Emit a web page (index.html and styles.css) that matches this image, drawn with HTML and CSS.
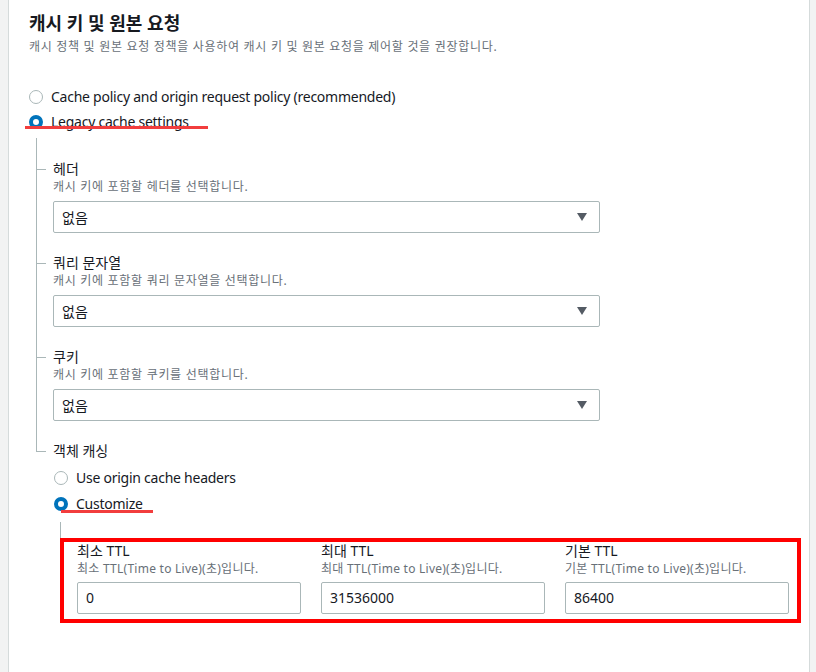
FILE: index.html
```html
<!DOCTYPE html>
<html lang="ko">
<head>
<meta charset="UTF-8">
<title>캐시 키 및 원본 요청</title>
<link rel="stylesheet" href="styles.css">
</head>
<body>
  <div class="panel">
    <h2 class="title">캐시 키 및 원본 요청</h2>
    <p class="subtitle">캐시 정책 및 원본 요청 정책을 사용하여 캐시 키 및 원본 요청을 제어할 것을 권장합니다.</p>

    <div class="radio-group top-group">
      <div class="radio-row">
        <span class="radio"></span>
        <span class="radio-label">Cache policy and origin request policy (recommended)</span>
      </div>
      <div class="radio-row">
        <span class="radio checked"></span>
        <span class="radio-label">Legacy cache settings</span>
        <span class="mark mark-legacy"></span>
      </div>
    </div>

    <div class="tree">
      <div class="tree-item">
        <div class="field-label">헤더</div>
        <div class="field-desc">캐시 키에 포함할 헤더를 선택합니다.</div>
        <div class="select">
          <span>없음</span>
          <svg class="caret" width="10" height="8" viewBox="0 0 10 8"><path d="M0 0 H10 L5 8 Z" fill="#545b64"/></svg>
        </div>
      </div>
      <div class="tree-item">
        <div class="field-label">쿼리 문자열</div>
        <div class="field-desc">캐시 키에 포함할 쿼리 문자열을 선택합니다.</div>
        <div class="select">
          <span>없음</span>
          <svg class="caret" width="10" height="8" viewBox="0 0 10 8"><path d="M0 0 H10 L5 8 Z" fill="#545b64"/></svg>
        </div>
      </div>
      <div class="tree-item">
        <div class="field-label">쿠키</div>
        <div class="field-desc">캐시 키에 포함할 쿠키를 선택합니다.</div>
        <div class="select">
          <span>없음</span>
          <svg class="caret" width="10" height="8" viewBox="0 0 10 8"><path d="M0 0 H10 L5 8 Z" fill="#545b64"/></svg>
        </div>
      </div>
      <div class="tree-item last">
        <div class="field-label">객체 캐싱</div>
        <div class="radio-group sub-group">
          <div class="radio-row">
            <span class="radio"></span>
            <span class="radio-label">Use origin cache headers</span>
          </div>
          <div class="radio-row">
            <span class="radio checked"></span>
            <span class="radio-label">Customize</span>
            <span class="mark mark-custom"></span>
          </div>
        </div>
        <div class="stem"></div>
        <div class="ttl-box">
          <div class="ttl-field">
            <div class="ttl-label">최소 TTL</div>
            <div class="ttl-desc">최소 TTL(Time to Live)(초)입니다.</div>
            <div class="input">0</div>
          </div>
          <div class="ttl-field">
            <div class="ttl-label">최대 TTL</div>
            <div class="ttl-desc">최대 TTL(Time to Live)(초)입니다.</div>
            <div class="input">31536000</div>
          </div>
          <div class="ttl-field">
            <div class="ttl-label">기본 TTL</div>
            <div class="ttl-desc">기본 TTL(Time to Live)(초)입니다.</div>
            <div class="input">86400</div>
          </div>
        </div>
      </div>
    </div>
  </div>
</body>
</html>
```

FILE: styles.css
```css
body {
  margin: 0;
  padding: 0;
  background: #f2f3f3;
  font-family: "Noto Sans", "Noto Sans CJK KR", sans-serif;
  color: #16191f;
}

.panel {
  box-sizing: border-box;
  width: 802px;
  min-height: 100vh;
  margin-left: 8px;
  padding: 0 20px;
  background: #fff;
  border-left: 1px solid #d5dbdb;
  border-right: 1px solid #d5dbdb;
}

.title {
  margin: 0;
  padding-top: 12px;
  font-size: 18px;
  line-height: 22px;
  font-weight: 700;
}

.subtitle {
  margin: 5px 0 0;
  font-size: 12px;
  line-height: 16px;
  letter-spacing: 0.7px;
  color: #687078;
}

/* radios */

.top-group {
  margin-top: 29px;
}

.radio-row {
  position: relative;
  display: flex;
  align-items: center;
  height: 25px;
}
.sub-group .radio-row {
  height: 26px;
}
.sub-group {
  margin-top: 4px;
}
.sub-group .radio {
  margin-left: 1px;
}

.radio {
  box-sizing: border-box;
  width: 14px;
  height: 14px;
  border-radius: 50%;
  border: 1.5px solid #aab7b8;
  background: #fff;
  flex-shrink: 0;
}
.radio.checked {
  border: 4px solid #0073bb;
}

.radio-label {
  margin-left: 8px;
  font-size: 14px;
  line-height: 20px;
  letter-spacing: -0.25px;
}

.mark {
  position: absolute;
  height: 3px;
  background: #f23d3d;
}
.mark-legacy {
  left: -4px;
  top: 17px;
  width: 183px;
}
.mark-custom {
  left: 8px;
  top: 19px;
  width: 92px;
}

/* tree */

.tree {
  margin-left: 7px;
  padding-top: 25px;
}

.tree-item {
  position: relative;
  padding-left: 17px;
  margin-bottom: 20px;
}
.tree-item::before {
  content: "";
  position: absolute;
  left: 0;
  top: -21px;
  bottom: 0;
  border-left: 1px solid #aab7b8;
}
.tree-item.last::before {
  bottom: auto;
  height: 31px;
}
.tree-item::after {
  content: "";
  position: absolute;
  left: 0;
  top: 10px;
  width: 10px;
  border-top: 1px solid #aab7b8;
}

.field-label {
  font-size: 14px;
  line-height: 20px;
}
.field-desc {
  font-size: 12px;
  line-height: 16px;
  letter-spacing: 0.7px;
  color: #687078;
}

.select {
  box-sizing: border-box;
  display: flex;
  align-items: center;
  justify-content: space-between;
  width: 547px;
  height: 32px;
  margin-top: 6px;
  padding: 0 12px 0 8px;
  border: 1px solid #aab7b8;
  border-radius: 2px;
  font-size: 14px;
}

.stem {
  height: 16px;
  margin-top: 5px;
  margin-left: 7px;
  border-left: 1px solid #aab7b8;
}

.ttl-box {
  box-sizing: border-box;
  width: 741px;
  margin-left: 7px;
  padding: 0 8px 5px 13px;
  border: 4px solid #ff0000;
  display: grid;
  grid-template-columns: repeat(3, 224px);
  column-gap: 20px;
}

.ttl-label {
  font-size: 14px;
  line-height: 18px;
}
.ttl-desc {
  font-size: 12px;
  line-height: 18px;
  letter-spacing: 0.25px;
  color: #687078;
}

.input {
  box-sizing: border-box;
  height: 32px;
  margin-top: 4px;
  padding: 0 8px;
  border: 1px solid #aab7b8;
  border-radius: 2px;
  font-size: 14px;
  line-height: 30px;
}
```
